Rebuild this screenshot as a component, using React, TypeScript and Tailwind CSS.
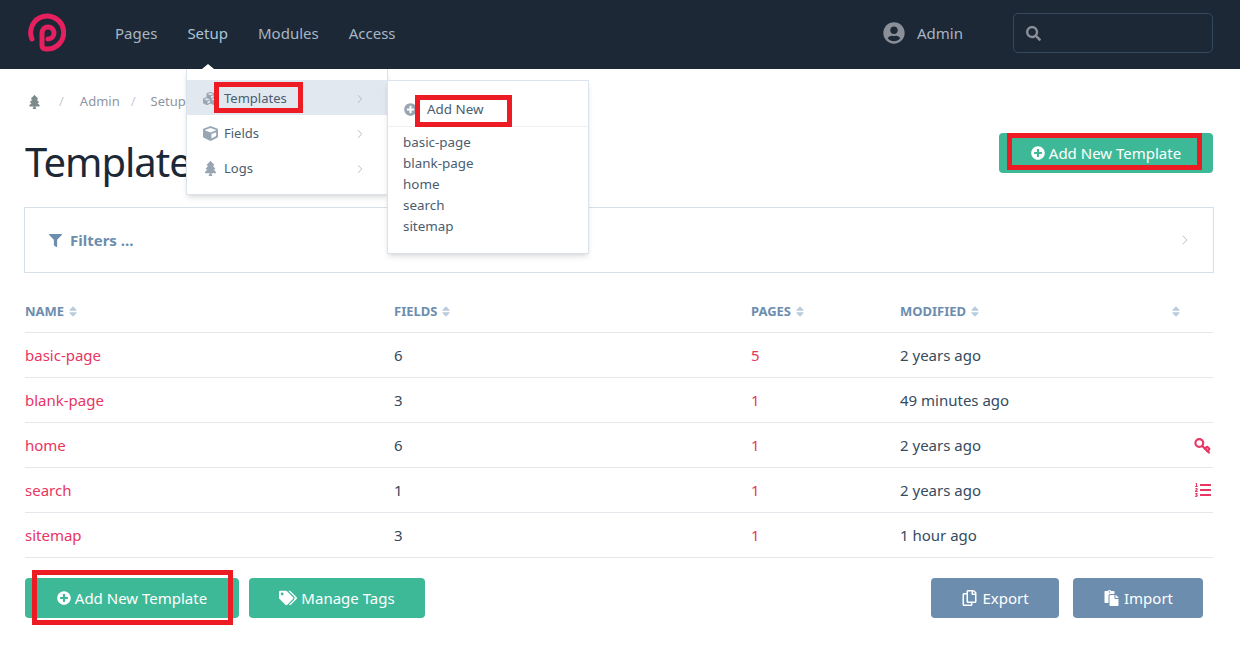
import React from "react";
import { ChevronRight, Key } from "lucide-react";
import {
  FaTree,
  FaCubes,
  FaCube,
  FaPlusCircle,
  FaFilter,
  FaSort,
  FaListOl,
  FaTags,
  FaRegCopy,
  FaPaste,
  FaUserCircle,
  FaSearch,
} from "react-icons/fa";

const rows = [
  { name: "basic-page", fields: "6", pages: "5", modified: "2 years ago" },
  { name: "blank-page", fields: "3", pages: "1", modified: "49 minutes ago" },
  { name: "home", fields: "6", pages: "1", modified: "2 years ago", icon: "key" },
  { name: "search", fields: "1", pages: "1", modified: "2 years ago", icon: "list" },
  { name: "sitemap", fields: "3", pages: "1", modified: "1 hour ago" },
];

const Logo = () => (
  <svg width="40" height="40" viewBox="0 0 40 40" fill="none" stroke="#e6205f" strokeWidth="5">
    <path d="M6 26 A16.5 16.5 0 1 1 20 36 C17.5 36 16 34.5 16 32 L16 20 A6 6 0 1 1 22 26" strokeLinecap="round" />
  </svg>
);

const Highlight = ({ className }: { className: string }) => (
  <div className={`absolute border-[5px] border-[#ed1c24] pointer-events-none ${className}`} />
);

const Header = ({ label }: { label: string }) => (
  <div className="flex items-center gap-[5px] pt-[1px] text-[13px] font-bold text-[#6c8dae]">
    {label}
    <FaSort className="text-[#b9cbdd] w-[8px] h-[13px]" />
  </div>
);

const App: React.FC = () => {
  return (
    <div className="relative w-[1240px] h-[646px] overflow-hidden bg-white text-[#354b60] font-['Noto_Sans','Open_Sans',sans-serif]">
      {/* Top bar */}
      <header className="h-[69px] bg-[#1c2836] flex items-center pl-[26px] pr-[27px] pb-[3px]">
        <Logo />
        <nav className="flex items-center gap-[30px] ml-[49px] text-[15px] text-[#a8b5c2]">
          <span>Pages</span>
          <span className="text-[#a9c5da]">Setup</span>
          <span>Modules</span>
          <span>Access</span>
        </nav>
        <div className="ml-auto flex items-center text-[15px] text-[#a8b5c2]">
          <FaUserCircle className="w-[22px] h-[22px] text-[#8a8f98] mr-[12px]" />
          Admin
        </div>
        <div className="ml-[50px] w-[200px] h-[40px] border border-[#34495f] rounded-[5px] flex items-center pl-[12px]">
          <FaSearch className="w-[15px] h-[15px] text-[#8a8f98]" />
        </div>
      </header>

      <main className="pl-[25px] pr-[27px]">
        {/* Breadcrumbs */}
        <div className="flex items-center h-[20px] mt-[23px] text-[13px] text-[#8d96a3]">
          <FaTree className="w-[13px] h-[14px] text-[#7d8a8c] ml-[3px]" />
          <span className="ml-[18px] text-[#c4cdd6]">/</span>
          <span className="ml-[16px]">Admin</span>
          <span className="ml-[11px] text-[#c4cdd6]">/</span>
          <span className="ml-[15px]">Setup</span>
        </div>

        {/* Title */}
        <div className="flex items-start justify-between mt-[19px]">
          <h1 className="text-[40px] leading-[62px] tracking-[-1px] text-[#1c2836]">Templates</h1>
          <button className="w-[214px] h-[40px] mt-[2px] bg-[#3eb998] rounded-[4px] text-white text-[15px] flex items-center justify-center gap-[4px]">
            <FaPlusCircle className="w-[14px] h-[14px]" /> Add New Template
          </button>
        </div>

        {/* Filters */}
        <div className="mt-[14px] -mx-px h-[66px] border border-[#d5e0ea] flex items-center pl-[24px] pr-[20px] text-[#6c8dae]">
          <FaFilter className="w-[13px] h-[13px]" />
          <span className="ml-[8px] text-[15px] font-bold">Filters ...</span>
          <ChevronRight className="ml-auto w-[16px] h-[16px] text-[#b6c3cf]" strokeWidth={1.5} />
        </div>

        {/* Table */}
        <div className="mt-[17px] w-[1188px]">
          <div className="grid grid-cols-[369px_357px_149px_1fr_41px] items-center h-[43px] border-b border-[#e4e7eb]">
            <Header label="NAME" />
            <Header label="FIELDS" />
            <Header label="PAGES" />
            <Header label="MODIFIED" />
            <Header label="" />
          </div>
          {rows.map((row) => (
            <div
              key={row.name}
              className="grid grid-cols-[369px_357px_149px_1fr_41px] items-center h-[45px] border-b border-[#e4e7eb] text-[15px]"
            >
              <span className="text-[#e83561]">{row.name}</span>
              <span>{row.fields}</span>
              <span className="text-[#e83561]">{row.pages}</span>
              <span>{row.modified}</span>
              <span className="flex justify-end pr-[2px] text-[#e83561]">
                {row.icon === "key" && <Key className="w-[17px] h-[17px] -scale-y-100" strokeWidth={3} />}
                {row.icon === "list" && <FaListOl className="w-[16px] h-[16px]" />}
              </span>
            </div>
          ))}
        </div>

        {/* Bottom buttons */}
        <div className="flex mt-[20px] pr-[10px]">
          <button className="w-[214px] h-[40px] bg-[#3eb998] rounded-[4px] text-white text-[15px] flex items-center justify-center gap-[4px]">
            <FaPlusCircle className="w-[14px] h-[14px]" /> Add New Template
          </button>
          <button className="ml-[10px] w-[176px] h-[40px] bg-[#3eb998] rounded-[4px] text-white text-[15px] flex items-center justify-center gap-[4px]">
            <FaTags className="w-[18px] h-[16px]" /> Manage Tags
          </button>
          <button className="ml-auto w-[128px] h-[40px] bg-[#6c8dae] rounded-[4px] text-white text-[15px] flex items-center justify-center gap-[4px]">
            <FaRegCopy className="w-[17px] h-[16px]" /> Export
          </button>
          <button className="ml-[14px] w-[130px] h-[40px] bg-[#6c8dae] rounded-[4px] text-white text-[15px] flex items-center justify-center gap-[4px]">
            <FaPaste className="w-[17px] h-[16px]" /> Import
          </button>
        </div>
      </main>

      {/* Setup dropdown */}
      <div className="absolute left-[186px] top-[69px] w-[202px] h-[126px] bg-white border border-[#dbe4ec] border-t-0 shadow-md pt-[11px] text-[13px] text-[#4a5d70]">
        <div className="absolute left-[15px] top-[-5px] w-0 h-0 border-x-[6px] border-x-transparent border-b-[5px] border-b-white" />
        {[
          { label: "Templates", Icon: FaCubes, active: true },
          { label: "Fields", Icon: FaCube },
          { label: "Logs", Icon: FaTree },
        ].map(({ label, Icon, active }) => (
          <div key={label} className={`h-[35px] flex items-center pl-[12px] pr-[20px] pt-[2px] ${active ? "bg-[#e2e8f0]" : ""}`}>
            <span className="w-[22px] flex justify-center mr-[3px]">
              <Icon className="w-[15px] h-[15px] text-[#98a6b3]" />
            </span>
            {label}
            <ChevronRight className="ml-auto w-[14px] h-[14px] text-[#aab6c1]" strokeWidth={1.5} />
          </div>
        ))}
      </div>

      {/* Templates submenu */}
      <div className="absolute left-[387px] top-[80px] w-[202px] h-[174px] bg-white border border-[#dbe4ec] shadow-md text-[13.4px] text-[#4a5d70]">
        <div className="h-[46px] border-b border-[#eef1f5] flex items-center pl-[16px] pt-[12px]">
          <FaPlusCircle className="w-[13px] h-[13px] text-[#98a6b3]" />
          <span className="ml-[10px]">Add New</span>
        </div>
        <div className="pl-[15px] pt-[5px] leading-[21px]">
          <div>basic-page</div>
          <div>blank-page</div>
          <div>home</div>
          <div>search</div>
          <div>sitemap</div>
        </div>
      </div>

      {/* Red annotation boxes */}
      <Highlight className="left-[214px] top-[82px] w-[89px] h-[31px]" />
      <Highlight className="left-[415px] top-[95px] w-[97px] h-[32px]" />
      <Highlight className="left-[1007px] top-[133px] w-[195px] h-[37px]" />
      <Highlight className="left-[32px] top-[570px] w-[201px] h-[55px]" />
    </div>
  );
};

export default App;
